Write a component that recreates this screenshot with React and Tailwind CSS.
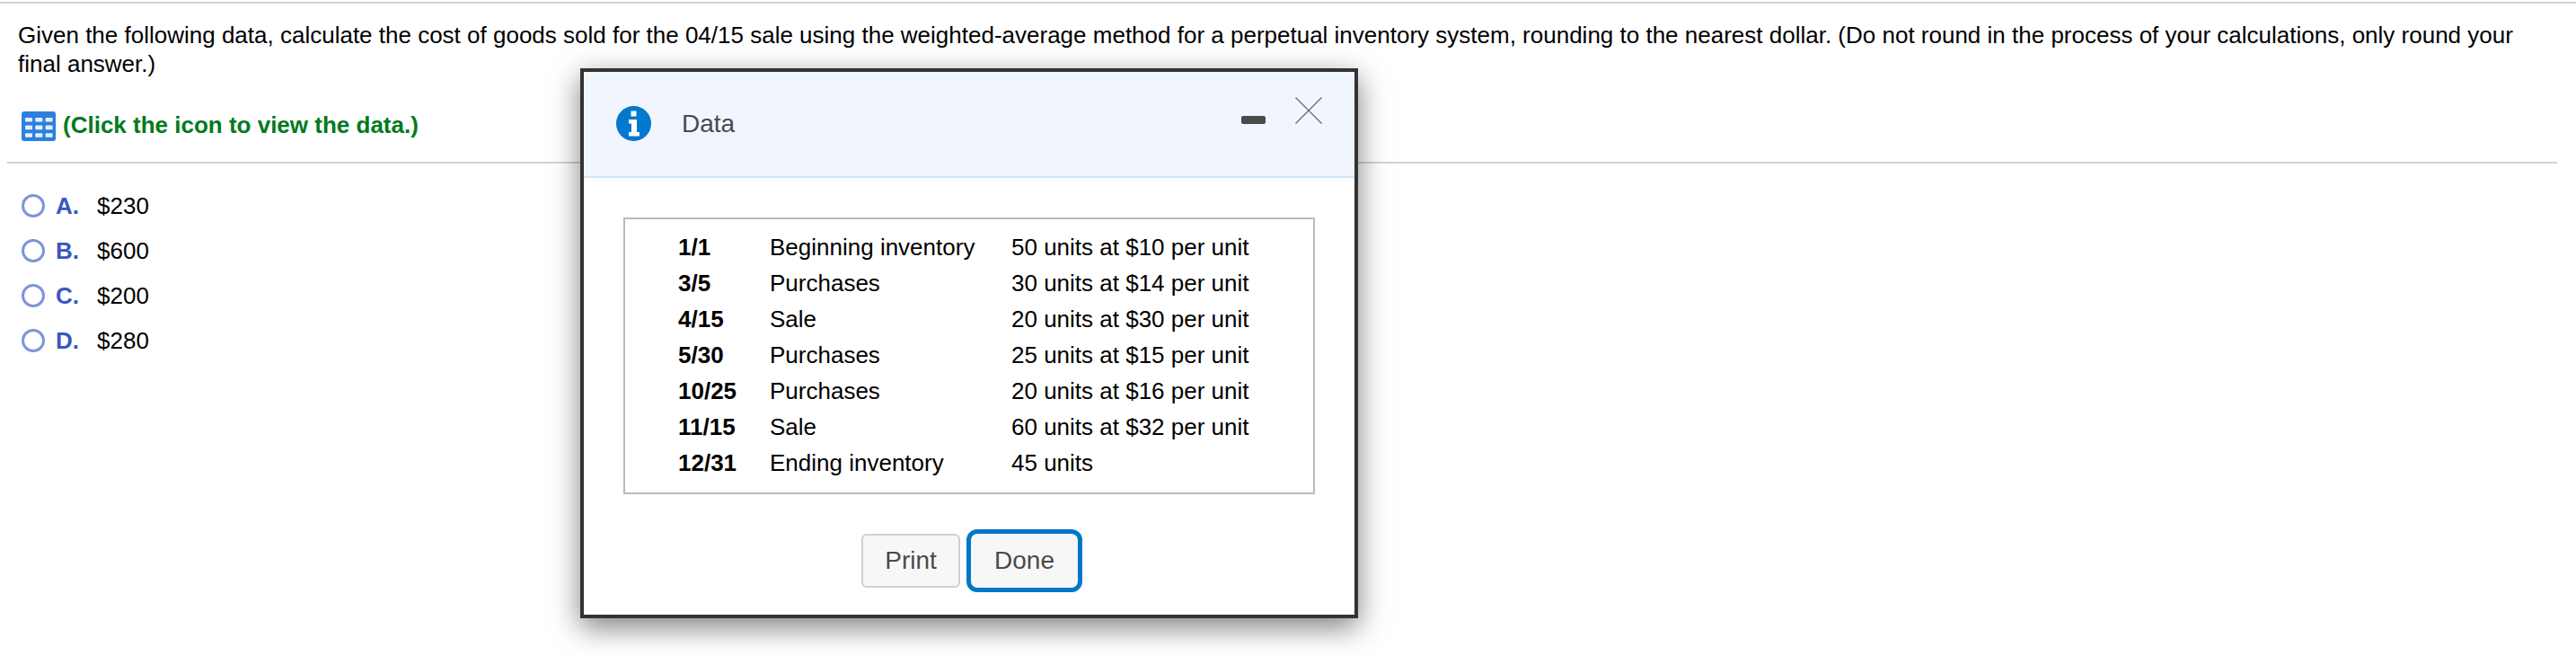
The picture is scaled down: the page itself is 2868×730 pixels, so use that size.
const ff = "font-['Liberation_Sans',Arial,sans-serif]";

const rows = [
  ["1/1", "Beginning inventory", "50 units at $10 per unit"],
  ["3/5", "Purchases", "30 units at $14 per unit"],
  ["4/15", "Sale", "20 units at $30 per unit"],
  ["5/30", "Purchases", "25 units at $15 per unit"],
  ["10/25", "Purchases", "20 units at $16 per unit"],
  ["11/15", "Sale", "60 units at $32 per unit"],
  ["12/31", "Ending inventory", "45 units"],
];

const options = [
  ["A.", "$230"],
  ["B.", "$600"],
  ["C.", "$200"],
  ["D.", "$280"],
];

function TableIcon() {
  const cells = [];
  for (let r = 0; r < 3; r++) {
    for (let c = 0; c < 3; c++) {
      cells.push(<rect key={`${r}-${c}`} x={4 + c * 11.3} y={7 + r * 8.6} width={8} height={4.6} rx={0.8} fill="#ffffff" fillOpacity={0.88} />);
    }
  }
  return (
    <svg width="38" height="33" viewBox="0 0 38 33" className="shrink-0">
      <rect width="38" height="33" rx="3" fill="#2b80dd" />
      {cells}
    </svg>
  );
}

function InfoIcon() {
  return (
    <svg width="39" height="39" viewBox="0 0 39 39" className="shrink-0">
      <circle cx="19.5" cy="19.5" r="19.5" fill="#0079ce" />
      <rect x="16.5" y="5.5" width="6" height="6" fill="#ffffff" />
      <path d="M14 15h9v14h3v4.5H14V29h3v-9.5h-3z" fill="#ffffff" />
    </svg>
  );
}

function CloseIcon() {
  return (
    <svg width="30" height="30" viewBox="0 0 30 30" className="shrink-0">
      <path d="M0.5 0.5L29.5 29.5M29.5 0.5L0.5 29.5" stroke="#666666" strokeWidth="1.2" fill="none" />
    </svg>
  );
}

export default function App() {
  return (
    <div className={`${ff} relative h-[730px] w-[2868px] overflow-hidden bg-white text-black`}>
      <div className="pt-[2px]">
        <div className="h-[2px] bg-[#cdd2dd]" />
      </div>
      <p className="m-0 w-[2810px] pl-[20px] pt-[19px] text-[26px] leading-[32px]">
        Given the following data, calculate the cost of goods sold for the 04/15 sale using the weighted-average method for a perpetual inventory system, rounding to the nearest dollar. (Do not round in the process of your calculations, only round your final answer.)
      </p>
      <div className="mt-[37px] flex h-[33px] items-center gap-[8px] pl-[24px]">
        <TableIcon />
        <span className="mb-[2px] text-[26px] font-bold text-[#007a1e]">(Click the icon to view the data.)</span>
      </div>
      <div className="ml-[8px] mt-[23px] h-[2px] w-[2839px] bg-[#cdd2dd]" />
      <div className="mt-[22px] flex flex-col pl-[24px]">
        {options.map(([l, v]) => (
          <div key={l} className="flex h-[50px] items-center text-[26px]">
            <span className="h-[26px] w-[26px] shrink-0 rounded-full border-[3px] border-[#8094dc] bg-white" />
            <span className="ml-[12px] w-[46px] font-bold text-[#3a56c4]">{l}</span>
            <span>{v}</span>
          </div>
        ))}
      </div>

      <div className="absolute left-[646px] top-[76px] flex h-[612px] w-[866px] flex-col border-4 border-[#333333] bg-white shadow-[0_10px_30px_rgba(0,0,0,0.5)]">
        <div className="flex h-[118px] shrink-0 items-start border-b-2 border-[#cde6f8] bg-[#f1f6fe]">
          <div className="ml-[36px] mt-[38px]"><InfoIcon /></div>
          <span className="ml-[34px] mt-[41px] text-[28px] leading-[34px] text-[#4a4a4a]">Data</span>
          <span className="ml-auto mt-[49px] h-[9px] w-[27px] rounded-[2px] bg-[#4a4a4a]" />
          <div className="ml-[33px] mr-[36px] mt-[28px]"><CloseIcon /></div>
        </div>
        <div className="mx-[44px] mt-[44px] flex h-[308px] w-[770px] flex-col border-2 border-[#bbbbbb] pt-[11px]">
          {rows.map(([d, n, q]) => (
            <div key={d} className="flex h-[40px] items-center text-[26px]">
              <span className="ml-[59px] w-[102px] font-bold">{d}</span>
              <span className="w-[269px]">{n}</span>
              <span>{q}</span>
            </div>
          ))}
        </div>
        <div className="mt-[39px] flex items-center gap-[7px] pl-[309px] text-[28px] text-[#4a4a4a]">
          <button className="flex h-[60px] w-[110px] items-center justify-center rounded-[6px] border-2 border-[#d0d0d0] bg-[#f7f7f7]">Print</button>
          <button className="flex h-[70px] w-[129px] items-center justify-center rounded-[12px] border-[5px] border-[#0077c8] bg-[#f7f7f7]">Done</button>
        </div>
      </div>
    </div>
  );
}
